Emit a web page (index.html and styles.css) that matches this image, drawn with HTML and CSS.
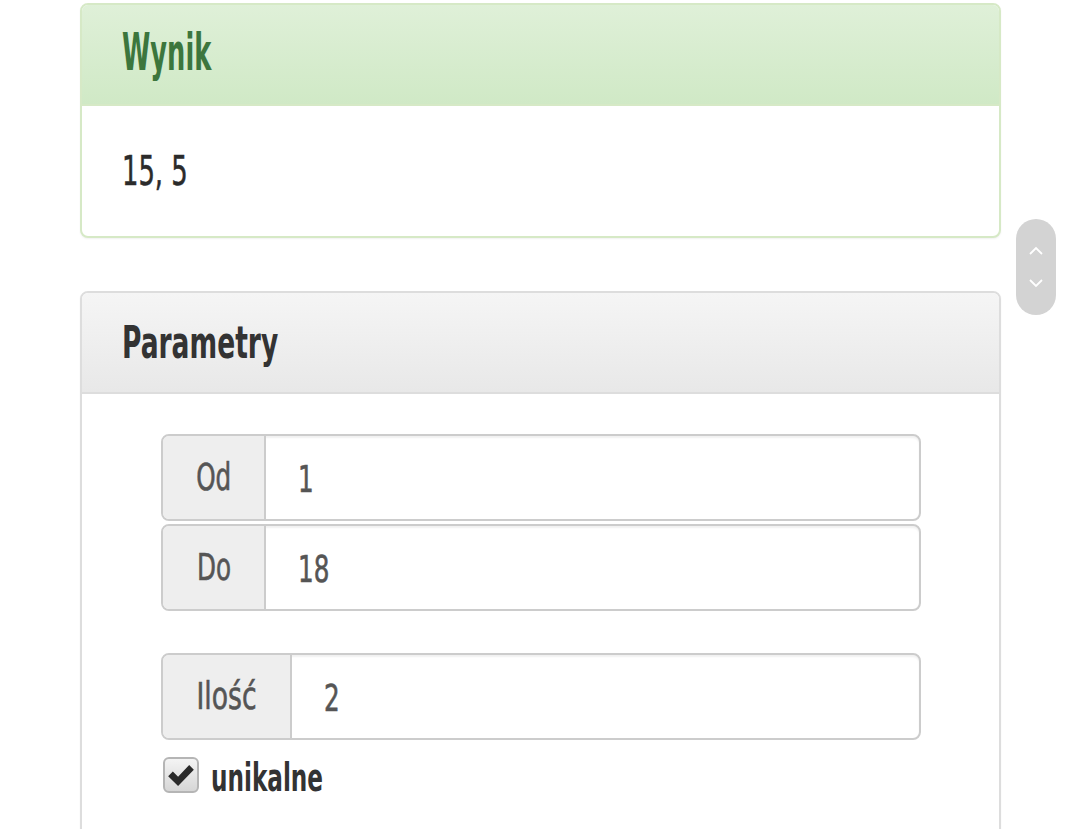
FILE: index.html
```html
<!DOCTYPE html>
<html lang="pl">
<head>
<meta charset="utf-8">
<title>Losowanie liczb</title>
<link rel="stylesheet" href="styles.css">
</head>
<body>
<main class="page">
  <section class="panel panel-success">
    <div class="panel-heading"><h2 class="panel-title"><span class="cond t-wynik">Wynik</span></h2></div>
    <div class="panel-body result"><span class="cond t-result">15, 5</span></div>
  </section>

  <section class="panel panel-default">
    <div class="panel-heading"><h2 class="panel-title"><span class="cond t-param">Parametry</span></h2></div>
    <div class="panel-body params">
      <div class="range">
        <div class="input-group">
          <span class="addon addon-sm"><span class="cond t-addon">Od</span></span>
          <span class="field"><span class="cond t-field">1</span></span>
        </div>
        <div class="input-group">
          <span class="addon addon-sm"><span class="cond t-addon">Do</span></span>
          <span class="field"><span class="cond t-field">18</span></span>
        </div>
      </div>
      <div class="input-group">
        <span class="addon addon-lg"><span class="cond t-addon t-ilosc">Ilość</span></span>
        <span class="field"><span class="cond t-field">2</span></span>
      </div>
      <label class="check">
        <span class="box"><svg viewBox="0 0 24 24" width="28" height="28"><path d="M1 13 L5 9 L9.5 13.5 L19 3.5 L23 7.5 L9.5 21.5 Z" fill="#2a2a2a"/></svg></span>
        <span class="cond check-label">unikalne</span>
      </label>
    </div>
  </section>
</main>
<div class="scroller">
  <svg viewBox="0 0 16 10" width="16" height="10"><path d="M2 8 L8 2 L14 8" fill="none" stroke="#fff" stroke-width="1.8"/></svg>
  <svg viewBox="0 0 16 10" width="16" height="10"><path d="M2 2 L8 8 L14 2" fill="none" stroke="#fff" stroke-width="1.8"/></svg>
</div>
</body>
</html>
```

FILE: styles.css
```css
html, body {
  margin: 0;
  padding: 0;
  background: #fff;
}
body {
  font-family: "DejaVu Sans Condensed", "DejaVu Sans", sans-serif;
  color: #333;
  overflow: hidden;
  height: 829px;
}
.cond {
  display: inline-block;
  transform-origin: left center;
  white-space: nowrap;
}
.page {
  width: 921px;
  margin-left: 80px;
  padding-top: 3px;
}
.panel {
  border: 2px solid #ddd;
  border-radius: 8px;
  margin-bottom: 53px;
  background: #fff;
  box-shadow: 0 1px 2px rgba(0,0,0,0.06);
}
.panel-success { border-color: #d6e9c6; }
.panel-heading {
  height: 99px;
  display: flex;
  align-items: center;
  padding-left: 40px;
  border-radius: 6px 6px 0 0;
  border-bottom: 2px solid #ddd;
}
.panel-success .panel-heading {
  background: linear-gradient(#dff0d8, #d0e9c6);
  border-bottom-color: #d6e9c6;
  color: #3c763d;
}
.panel-default .panel-heading {
  background: linear-gradient(#f5f5f5, #e8e8e8);
  color: #333;
}
.panel-title {
  margin: 0;
  font-weight: bold;
  line-height: 1;
}
.t-wynik {
  font-size: 51px;
  transform: scaleX(0.56);
  margin-bottom: 4px;
}
.t-param {
  font-size: 44px;
  transform: scaleX(0.67);
}
.result {
  height: 130px;
  display: flex;
  align-items: center;
  padding-left: 40px;
}
.t-result {
  font-size: 41px;
  transform: scaleX(0.7);
  color: #2b2b2b;
  -webkit-text-stroke: 0.5px currentColor;
}
.params {
  padding: 40px 78px 40px 79px;
  height: 600px;
}
.range {
  display: flex;
  flex-direction: column;
  gap: 3px;
  margin-bottom: 42px;
}
.input-group {
  display: flex;
  height: 87px;
  box-sizing: border-box;
  border: 2px solid #ccc;
  border-radius: 8px;
  overflow: hidden;
  box-shadow: inset 0 2px 2px rgba(0,0,0,0.06);
  font-size: 37px;
}
.addon {
  display: flex;
  align-items: center;
  justify-content: center;
  background: #eee;
  border-right: 2px solid #ccc;
  color: #555;
  box-sizing: border-box;
}
.addon-sm { width: 103px; }
.addon-lg { width: 129px; }
.t-addon {
  transform: scaleX(0.74);
  transform-origin: center center;
  -webkit-text-stroke: 0.6px currentColor;
}
.t-ilosc { transform: scaleX(0.8); }
.field {
  display: flex;
  align-items: center;
  padding-left: 32px;
  flex: 1;
  color: #555;
  padding-top: 4px;
}
.t-field {
  transform: scaleX(0.74);
  -webkit-text-stroke: 0.6px currentColor;
}
.check {
  display: flex;
  align-items: center;
  gap: 12px;
  margin-top: 9px;
  margin-left: 2px;
}
.box {
  width: 32px;
  height: 32px;
  border: 2px solid #b5b5b5;
  border-radius: 6px;
  background: linear-gradient(#f4f4f4, #d6d6d6);
  display: flex;
  align-items: center;
  justify-content: center;
}
.check-label {
  font-size: 39px;
  font-weight: bold;
  transform: scaleX(0.66);
  color: #333;
  padding-top: 6px;
}
.scroller {
  position: fixed;
  left: 1016px;
  top: 219px;
  width: 40px;
  height: 96px;
  border-radius: 20px;
  background: #d3d3d3;
  display: flex;
  flex-direction: column;
  align-items: center;
  justify-content: center;
  gap: 22px;
}
```
